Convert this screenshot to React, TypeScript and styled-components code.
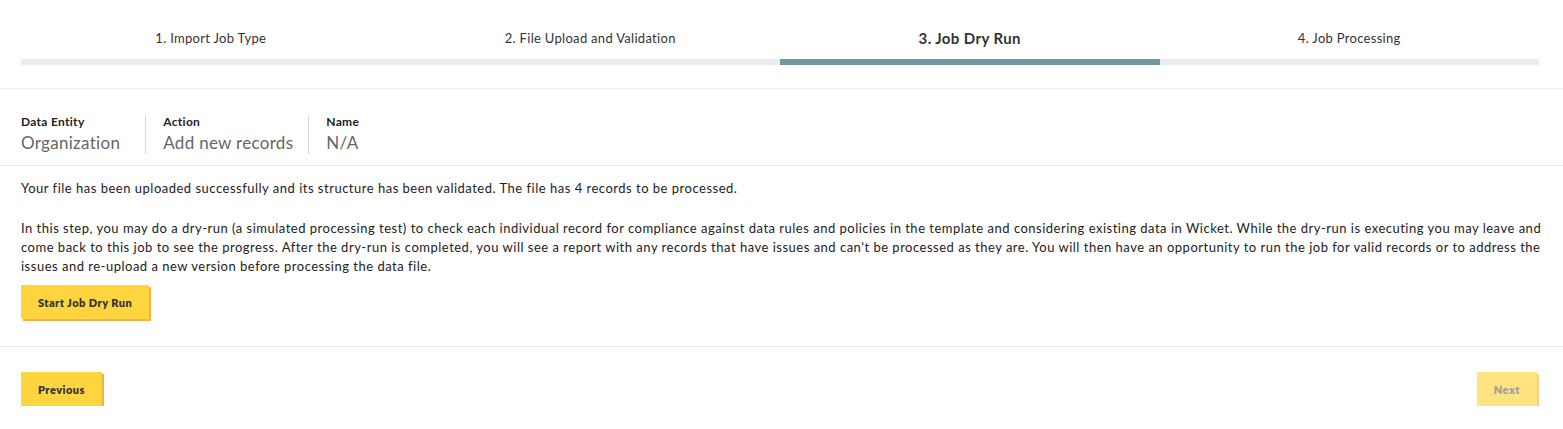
import React from 'react';
import styled, { createGlobalStyle } from 'styled-components';

const GlobalStyle = createGlobalStyle`
  body {
    margin: 0;
    background: #fff;
    font-family: Lato, "Liberation Sans", sans-serif;
    color: #333;
  }
`;

const steps = ['1. Import Job Type', '2. File Upload and Validation', '3. Job Dry Run', '4. Job Processing'];
const activeStep = 2;

const meta = [
  { label: 'Data Entity', value: 'Organization' },
  { label: 'Action', value: 'Add new records' },
  { label: 'Name', value: 'N/A' },
];

const Page = styled.div`
  width: 1563px;
`;

const Stepper = styled.div`
  display: grid;
  grid-template-columns: repeat(4, 1fr);
  padding: 29px 24px 23px 21px;
  border-bottom: 1px solid #ebebeb;
`;

const Step = styled.div<{ $active?: boolean }>`
  display: flex;
  flex-direction: column;
  align-items: center;
  gap: 12px;
  font-size: ${p => (p.$active ? '15px' : '13px')};
  font-weight: ${p => (p.$active ? 700 : 400)};
  letter-spacing: ${p => (p.$active ? '0.4px' : '0.3px')};
  color: #333;
  line-height: 18px;

  &::after {
    content: '';
    align-self: stretch;
    height: 6px;
    background: ${p => (p.$active ? '#6f98a2' : '#ebebeb')};
  }
`;

const MetaRow = styled.div`
  display: flex;
  padding: 26px 21px 11px;
  border-bottom: 1px solid #ebebeb;
`;

const MetaItem = styled.div`
  display: flex;
  flex-direction: column;
  gap: 3px;
  padding: 0 15px 0 17px;
  border-left: 1px solid #d6d6d6;

  &:first-child {
    padding-left: 0;
    padding-right: 25px;
    border-left: none;
  }
`;

const MetaLabel = styled.div`
  font-size: 12px;
  font-weight: 700;
  color: #222;
  line-height: 14px;
  letter-spacing: 0.3px;
`;

const MetaValue = styled.div`
  font-size: 17px;
  color: #666;
  line-height: 22px;
  letter-spacing: 0.3px;
`;

const Body = styled.div`
  display: flex;
  flex-direction: column;
  align-items: flex-start;
  gap: 21px;
  padding: 13px 21px 27px;
  border-bottom: 1px solid #ebebeb;
`;

const Para = styled.p`
  margin: 0;
  font-size: 13px;
  line-height: 19px;
  letter-spacing: 0.5px;
  color: #222;
`;

const Button = styled.button<{ $disabled?: boolean }>`
  font-family: Lato, "Liberation Sans", sans-serif;
  font-size: 11px;
  font-weight: 800;
  letter-spacing: 0.45px;
  color: ${p => (p.$disabled ? '#6b6b6b' : '#333')};
  background: #ffd53f;
  border: none;
  box-shadow: 2px 2px 0 #f1b344;
  padding: 0 17px;
  height: 34px;
  cursor: pointer;
  opacity: ${p => (p.$disabled ? 0.65 : 1)};
`;

const StartButton = styled(Button)`
  margin-top: -12px;
`;

const Footer = styled.div`
  display: flex;
  justify-content: space-between;
  padding: 25px 26px 0 21px;
`;

export default function App() {
  return (
    <Page>
      <GlobalStyle />
      <Stepper>
        {steps.map((s, i) => (
          <Step key={s} $active={i === activeStep}>{s}</Step>
        ))}
      </Stepper>
      <MetaRow>
        {meta.map(m => (
          <MetaItem key={m.label}>
            <MetaLabel>{m.label}</MetaLabel>
            <MetaValue>{m.value}</MetaValue>
          </MetaItem>
        ))}
      </MetaRow>
      <Body>
        <Para>
          Your file has been uploaded successfully and its structure has been validated. The file has 4 records to be processed.
        </Para>
        <Para>
          In this step, you may do a dry-run (a simulated processing test) to check each individual record for compliance against data rules and policies in the template and considering existing data in Wicket. While the dry-run is executing you may leave and come back to this job to see the progress. After the dry-run is completed, you will see a report with any records that have issues and can't be processed as they are. You will then have an opportunity to run the job for valid records or to address the issues and re-upload a new version before processing the data file.
        </Para>
        <StartButton>Start Job Dry Run</StartButton>
      </Body>
      <Footer>
        <Button>Previous</Button>
        <Button $disabled>Next</Button>
      </Footer>
    </Page>
  );
}
